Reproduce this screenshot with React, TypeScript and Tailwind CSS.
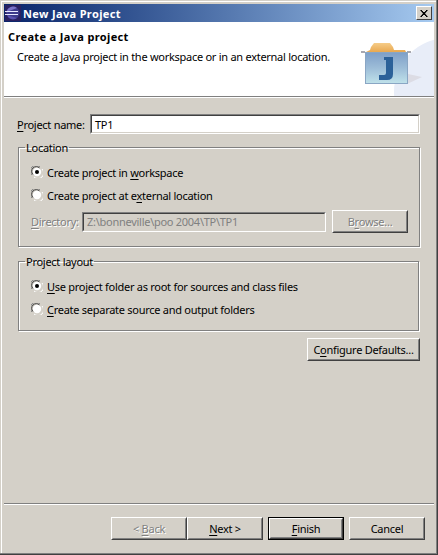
const font = "font-['Noto_Sans',Tahoma,sans-serif]";

function Mnemonic({ text, at }: { text: string; at: number }) {
  return (
    <>
      {text.slice(0, at)}
      <span className="underline underline-offset-2">{text[at]}</span>
      {text.slice(at + 1)}
    </>
  );
}

function Radio({ checked }: { checked?: boolean }) {
  return (
    <svg width="12" height="12" viewBox="0 0 12 12" className="shrink-0">
      <path d="M1 9 A5.5 5.5 0 0 1 9 1" fill="none" stroke="#808080" />
      <path d="M2 8.5 A4.5 4.5 0 0 1 8.5 2" fill="none" stroke="#404040" />
      <circle cx="6" cy="6" r="4.2" fill="#fff" />
      <path d="M11 3 A5.5 5.5 0 0 1 3 11" fill="none" stroke="#fff" />
      {checked && <circle cx="6" cy="6" r="2" fill="#000" />}
    </svg>
  );
}

function Btn({
  children,
  className = "",
  disabled,
  isDefault,
}: {
  children: React.ReactNode;
  className?: string;
  disabled?: boolean;
  isDefault?: boolean;
}) {
  const color = disabled
    ? "text-[#808080] [text-shadow:1px_1px_0_#fff]"
    : "text-black";
  const frame = isDefault ? "border border-black" : "";
  return (
    <div className={`${frame} ${className} flex`}>
      <div className="flex-1 flex border border-t-white border-l-white border-r-[#404040] border-b-[#404040]">
        <div
          className={`flex-1 flex items-center justify-center border border-t-transparent border-l-transparent border-r-[#808080] border-b-[#808080] ${color}`}
        >
          {children}
        </div>
      </div>
    </div>
  );
}

function Field({
  value,
  disabled,
  className = "",
}: {
  value: string;
  disabled?: boolean;
  className?: string;
}) {
  return (
    <div
      className={`${className} border border-t-[#808080] border-l-[#808080] border-r-white border-b-white`}
    >
      <div
        className={`h-full flex items-center pl-[3px] border border-t-[#404040] border-l-[#404040] border-r-[#d4d0c8] border-b-[#d4d0c8] ${
          disabled ? "bg-[#d4d0c8] text-[#808080]" : "bg-white text-black"
        }`}
      >
        {value}
      </div>
    </div>
  );
}

function Group({
  title,
  className = "",
  children,
}: {
  title: string;
  className?: string;
  children: React.ReactNode;
}) {
  return (
    <fieldset
      className={`${className} ml-[16px] mr-[17px] border border-[#808080] shadow-[inset_1px_1px_0_#fff,1px_1px_0_#fff] px-[12px]`}
    >
      <legend className="-ml-[6px] px-[1px] leading-[13px]">{title}</legend>
      {children}
    </fieldset>
  );
}

function RadioRow({
  checked,
  children,
  className = "",
}: {
  checked?: boolean;
  children: React.ReactNode;
  className?: string;
}) {
  return (
    <div className={`flex items-center gap-[4px] h-[14px] ${className}`}>
      <Radio checked={checked} />
      <span>{children}</span>
    </div>
  );
}

function TitleIcon() {
  return (
    <svg width="16" height="16" viewBox="0 0 16 16">
      <rect width="16" height="16" fill="#2a2060" />
      <circle cx="8" cy="8" r="6.5" fill="#3d3a8c" />
      <path d="M1.5 8 A6.5 6.5 0 0 1 12 3 L4 6 Z" fill="#7a72c8" />
      <path d="M2 10 A6.5 6.5 0 0 0 12 13 Z" fill="#5b52b0" />
      <rect x="0" y="6" width="13" height="1" fill="#e8e8ff" />
      <rect x="0" y="9" width="13" height="1" fill="#e8e8ff" />
    </svg>
  );
}

function BannerArt() {
  return (
    <svg width="78" height="74" viewBox="0 0 78 74" className="shrink-0">
      <defs>
        <linearGradient id="folder" x1="0" y1="0" x2="0" y2="1">
          <stop offset="0" stopColor="#7e9fc8" />
          <stop offset="0.5" stopColor="#9dbdd8" />
          <stop offset="1" stopColor="#c0e2ea" />
        </linearGradient>
        <linearGradient id="tab" x1="0" y1="0" x2="0" y2="1">
          <stop offset="0" stopColor="#f6cc88" />
          <stop offset="1" stopColor="#e8a850" />
        </linearGradient>
      </defs>
      <circle cx="92" cy="70" r="54" fill="#e8edf8" />
      <path d="M10 62 L51 62 L66 55 L52 52 Z" fill="#dcdce4" />
      <path d="M10 30 L14 28 L15 25 L18 21 L34 21 L37 25 L38 28 L49 28 L50 30 Z" fill="url(#tab)" />
      <rect x="5" y="29" width="4" height="2" fill="#a8a8b0" />
      <rect x="51" y="29" width="4" height="2" fill="#a8a8b0" />
      <rect x="9.5" y="30.5" width="42" height="31" fill="url(#folder)" stroke="#8aa6c4" />
      <path d="M28 35 L37 35 L37 52 Q37 58 31 58 L23 58 L23 53 L28 53 Q30 53 30 51 L30 38 L28 38 Z" fill="#2c6199" />
    </svg>
  );
}

export default function App() {
  return (
    <div
      className={`${font} text-[11px] leading-[13px] tracking-[-0.27px] text-black w-[438px] h-[555px] bg-[#404040] pr-px pb-px`}
    >
      <div className="h-full bg-[#808080] pr-px pb-px">
        <div className="h-full bg-[#d4d0c8] pl-px pt-px">
          <div className="h-full bg-white pl-px pt-px">
            <div className="h-full bg-[#d4d0c8] p-[2px] flex flex-col">
              <div className="h-[18px] shrink-0 flex items-center pl-[1px] pr-[2px] gap-[2px] bg-gradient-to-r from-[#0a246a] to-[#a6caf0]">
                <TitleIcon />
                <span className="flex-1 font-bold text-white tracking-[0.35px]">New Java Project</span>
                <div className="w-[16px] h-[14px] bg-[#d4d0c8] border border-t-white border-l-white border-r-[#404040] border-b-[#404040] flex items-center justify-center">
                  <svg width="8" height="7" viewBox="0 0 8 7">
                    <path d="M0 0h2v1h1v1h2V1h1V0h2L5 3.5 8 7H6V6H5V5H3v1H2v1H0l3-3.5z" fill="#000" />
                  </svg>
                </div>
              </div>

              <div className="h-[74px] shrink-0 bg-white flex">
                <div className="flex-1 pl-[4px] pt-[8px]">
                  <div className="font-bold tracking-[0.35px]">Create a Java project</div>
                  <div className="pl-[9px] pt-[7px]">
                    Create a Java project in the workspace or in an external location.
                  </div>
                </div>
                <BannerArt />
              </div>
              <div className="h-px shrink-0 bg-[#808080]" />
              <div className="h-px shrink-0 bg-white" />

              <div className="flex-1 -mx-[2px] flex flex-col">
                <div className="flex items-center h-[20px] mt-[16px] ml-[15px] mr-[16px]">
                  <span className="w-[73px] shrink-0">
                    <Mnemonic text="Project name:" at={0} />
                  </span>
                  <Field value="TP1" className="flex-1 h-[20px]" />
                </div>

                <Group title="Location" className="mt-[7px] h-[106px]">
                  <RadioRow checked className="mt-[11px]">
                    <Mnemonic text="Create project in workspace" at={18} />
                  </RadioRow>
                  <RadioRow className="mt-[9px]">
                    <Mnemonic text="Create project at external location" at={19} />
                  </RadioRow>
                  <div className="flex items-center mt-[8px] -mr-[1px]">
                    <span className="w-[51px] shrink-0 text-[#808080] [text-shadow:1px_1px_0_#fff]">
                      <Mnemonic text="Directory:" at={0} />
                    </span>
                    <Field
                      disabled
                      value="Z:\bonneville\poo 2004\TP\TP1"
                      className="w-[244px] h-[20px]"
                    />
                    <Btn disabled className="ml-[6px] w-[76px] h-[23px]">
                      <Mnemonic text="Browse..." at={1} />
                    </Btn>
                  </div>
                </Group>

                <Group title="Project layout" className="mt-[8px] h-[76px]">
                  <RadioRow checked className="mt-[11px]">
                    <Mnemonic text="Use project folder as root for sources and class files" at={0} />
                  </RadioRow>
                  <RadioRow className="mt-[9px]">
                    <Mnemonic text="Create separate source and output folders" at={0} />
                  </RadioRow>
                </Group>

                <div className="flex justify-end mt-[7px] mr-[16px]">
                  <Btn className="w-[113px] h-[23px]">
                    <Mnemonic text="Configure Defaults..." at={1} />
                  </Btn>
                </div>

                <div className="flex-1" />
                <div className="h-px bg-[#808080] mx-[2px]" />
                <div className="h-px bg-white mx-[2px]" />
                <div className="flex justify-end items-center mt-[12px] mb-[11px] mr-[11px] h-[23px]">
                  <Btn disabled className="w-[76px] h-[23px]">
                    &lt;&nbsp;<Mnemonic text="Back" at={0} />
                  </Btn>
                  <Btn className="w-[76px] h-[23px]">
                    <Mnemonic text="Next" at={0} />&nbsp;&gt;
                  </Btn>
                  <Btn isDefault className="ml-[5px] w-[76px] h-[23px]">
                    <Mnemonic text="Finish" at={0} />
                  </Btn>
                  <Btn className="ml-[5px] w-[76px] h-[23px]">Cancel</Btn>
                </div>
              </div>
            </div>
          </div>
        </div>
      </div>
    </div>
  );
}
